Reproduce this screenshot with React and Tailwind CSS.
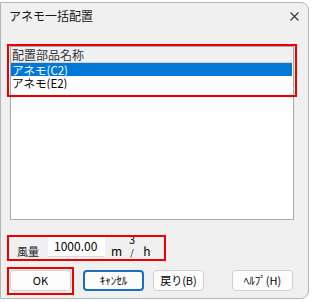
import React from "react";

const font = { fontFamily: '"Noto Sans CJK JP", "Noto Sans", sans-serif' };

const items = [
  { id: 1, name: "アネモ(C2)", selected: true },
  { id: 2, name: "アネモ(E2)", selected: false },
];

const Btn = ({ children, className = "", focus = false }) => (
  <div
    className={`h-[21px] flex items-center justify-center rounded-[4px] bg-[#fdfdfd] text-[11px] text-black ${
      focus ? "border-2 border-[#1a6fc4]" : "border border-[#d0d0d0]"
    } ${className}`}
  >
    {children}
  </div>
);

export default function App() {
  return (
    <div className="relative w-[312px] h-[302px] bg-white overflow-hidden" style={font}>
      {/* dialog window */}
      <div className="mt-[2px] w-[309px] h-[297px] bg-[#f0f0f0] border border-[#b4b4b4] rounded-r-[8px] flex flex-col">
        {/* title bar */}
        <div className="h-[26px] flex items-center justify-between pl-[8px] pr-[9px]">
          <span className="text-[12px] leading-[14px] text-[#1a1a1a]">アネモ一括配置</span>
          <svg width="9" height="9" viewBox="0 0 9 9">
            <path d="M0.5 0.5 L8.5 8.5 M8.5 0.5 L0.5 8.5" stroke="#333" strokeWidth="1.1" />
          </svg>
        </div>

        {/* list view */}
        <div className="mt-[17px] ml-[9px] w-[284px] h-[174px] bg-white border border-[#a8a8a8] flex flex-col">
          <div className="h-[16px] bg-[#f0f0f0] border-b border-[#d4d4d4] flex items-center pl-[1px]">
            <span className="text-[12px] leading-[14px] text-[#333]">配置部品名称</span>
          </div>
          <div className="pr-[1px]">
            {items.map((item) => (
              <div
                key={item.id}
                className={`h-[13px] flex items-center overflow-hidden text-[11.5px] leading-[12px] pl-[1px] ${
                  item.selected ? "bg-[#0078d7] text-white" : "text-black"
                }`}
              >
                {item.name}
              </div>
            ))}
          </div>
        </div>

        {/* air volume */}
        <div className="mt-[17px] ml-[16px] h-[20px] flex items-end">
          <span className="text-[11px] leading-[12px] text-[#222]">風量</span>
          <div className="ml-[9px] w-[57px] h-[20px] bg-white border-b border-[#dcdcdc] pl-[6px] pt-[2px] text-[12px] leading-[14px] text-black">
            1000.00
          </div>
          <span className="ml-[6px] text-[12px] leading-[12px] text-black">m</span>
          <div className="ml-[6px] w-[8px] h-[23px] -mt-[5px] flex flex-col items-center justify-between">
            <span className="text-[11px] leading-[11px] text-black">3</span>
            <span className="text-[9px] leading-[8px] text-black">/</span>
          </div>
          <span className="ml-[7px] text-[12px] leading-[12px] text-black">h</span>
        </div>

        {/* buttons */}
        <div className="mt-[13px] ml-[9px] flex items-start">
          <Btn className="w-[61px]">OK</Btn>
          <Btn className="ml-[12px] w-[61px]" focus>
            ｷｬﾝｾﾙ
          </Btn>
          <Btn className="ml-[9px] w-[51px]">戻り(B)</Btn>
          <Btn className="ml-[28px] w-[61px]">ﾍﾙﾌﾟ(H)</Btn>
        </div>
      </div>

      {/* red annotation boxes */}
      <div className="absolute left-[7px] top-[44px] w-[290px] h-[53px] border-2 border-[#ee0000] pointer-events-none" />
      <div className="absolute left-[7px] top-[235px] w-[159px] h-[26px] border-2 border-[#ee0000] pointer-events-none" />
      <div className="absolute left-[7px] top-[267px] w-[67px] h-[28px] border-2 border-[#ee0000] pointer-events-none" />
    </div>
  );
}
